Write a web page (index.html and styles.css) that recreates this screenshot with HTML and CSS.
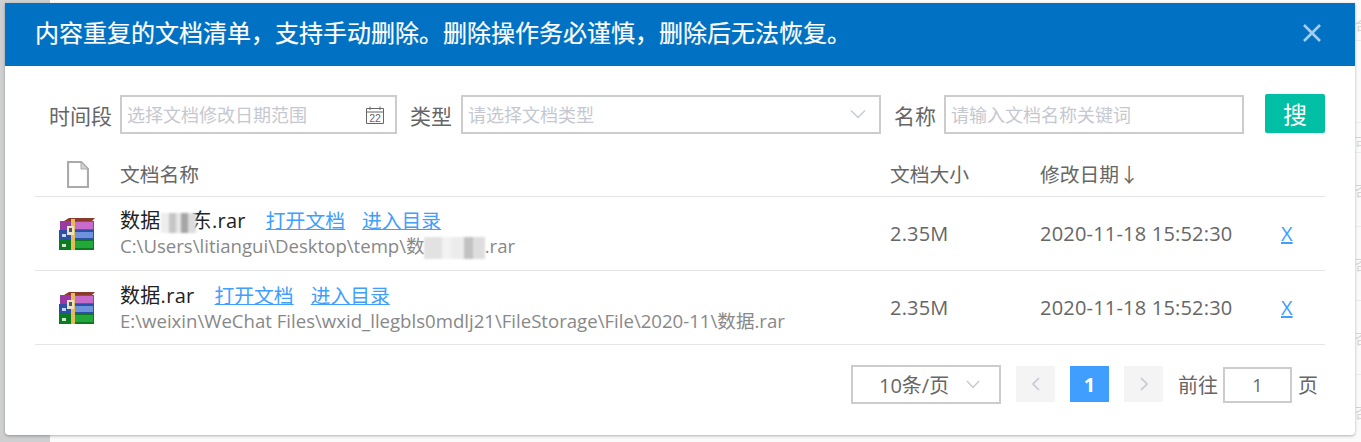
FILE: index.html
```html
<!DOCTYPE html>
<html lang="zh-CN">
<head>
<meta charset="utf-8">
<title>内容重复的文档清单</title>
<link rel="stylesheet" href="styles.css">
</head>
<body>
<aside class="side"></aside>
<main class="backdrop">
  <div class="bg-row bg-top"><span>合</span></div>
  <div class="bg-gap"></div>
  <div class="bg-row bg-head"><span>可</span></div>
  <div class="bg-row"><span>否</span></div>
  <div class="bg-row"><span>否</span></div>
  <div class="bg-row"><span>否</span></div>
  <div class="bg-row"><span>否</span></div>
</main>
<section class="modal">
  <header class="modal-head">
    <h1>内容重复的文档清单，支持手动删除。删除操作务必谨慎，删除后无法恢复。</h1>
    <svg class="close" viewBox="0 0 20 20" width="20" height="20"><path d="M2 2 18 18M18 2 2 18"/></svg>
  </header>
  <div class="modal-body">
    <div class="filters">
      <label class="lbl lbl-time">时间段</label>
      <div class="field f-date"><span>选择文档修改日期范围</span>
        <svg class="cal" viewBox="0 0 20 20" width="20" height="20"><path d="M1.5 3.5h17v15h-17zM1.5 7h17M5 1.5v3.5M15 1.5v3.5"/><text x="10" y="16.5" text-anchor="middle">22</text></svg>
      </div>
      <label class="lbl lbl-type">类型</label>
      <div class="field f-type"><span>请选择文档类型</span>
        <svg class="chev" viewBox="0 0 16 10" width="16" height="10"><path d="M1 1.5 8 8.5 15 1.5"/></svg>
      </div>
      <label class="lbl lbl-name">名称</label>
      <div class="field f-name"><span>请输入文档名称关键词</span></div>
      <button class="search">搜</button>
    </div>
    <div class="thead">
      <div class="c-icon">
        <svg viewBox="0 0 22 27" width="22" height="27"><path class="page" d="M1 1h13l7 7v18H1z"/><path class="fold" d="M14 1v7h7z"/></svg>
      </div>
      <div>文档名称</div>
      <div>文档大小</div>
      <div>修改日期↓</div>
      <div></div>
    </div>
    <div class="row">
      <div class="c-icon">
        <svg class="rar" viewBox="0 0 36 32" width="36" height="32"><use href="#rar"/></svg>
      </div>
      <div class="c-name">
        <div class="line1"><span class="fname">数据<span class="mosaic m1"></span>东.rar</span><a>打开文档</a><a>进入目录</a></div>
        <div class="fpath">C:\Users\litiangui\Desktop\temp\数<span class="mosaic m2"></span>.rar</div>
      </div>
      <div class="num">2.35M</div>
      <div class="num">2020-11-18 15:52:30</div>
      <div><a>X</a></div>
    </div>
    <div class="row">
      <div class="c-icon">
        <svg class="rar" viewBox="0 0 36 32" width="36" height="32"><use href="#rar"/></svg>
      </div>
      <div class="c-name">
        <div class="line1"><span class="fname">数据.rar</span><a>打开文档</a><a>进入目录</a></div>
        <div class="fpath">E:\weixin\WeChat Files\wxid_llegbls0mdlj21\FileStorage\File\2020-11\数据.rar</div>
      </div>
      <div class="num">2.35M</div>
      <div class="num">2020-11-18 15:52:30</div>
      <div><a>X</a></div>
    </div>
    <nav class="pager">
      <div class="field f-size"><span>10条/页</span>
        <svg class="chev small" viewBox="0 0 14 9" width="14" height="9"><path d="M1 1 7 7.5 13 1"/></svg>
      </div>
      <div class="pg"><svg viewBox="0 0 10 16" width="10" height="16"><path d="M8 2 2 8 8 14"/></svg></div>
      <div class="pg on">1</div>
      <div class="pg"><svg viewBox="0 0 10 16" width="10" height="16"><path d="M2 2 8 8 2 14"/></svg></div>
      <span class="goto">前往</span>
      <div class="field f-page">1</div>
      <span class="unit">页</span>
    </nav>
  </div>
</section>
<svg class="defs" width="0" height="0">
  <defs>
    <g id="rar">
      <path fill="#8a3a2a" d="M5 3 10 0h26l-3 3z"/>
      <rect x="1" y="3" width="34" height="10" fill="#9a3aa0"/>
      <rect x="16" y="4" width="18" height="7" fill="#c86ccb"/>
      <rect x="0" y="12" width="35" height="10" fill="#2c4fa8"/>
      <rect x="16" y="14" width="18" height="6" fill="#6f92dc"/>
      <rect x="0" y="22" width="35" height="10" fill="#0c7a1f"/>
      <rect x="16" y="23" width="18" height="7" fill="#23a63a"/>
      <rect x="3" y="26" width="4" height="3" fill="#cfe8cf"/>
      <rect x="12" y="1" width="4" height="31" fill="#e4bd5a"/>
      <rect x="8" y="8" width="7" height="9" fill="#e8e2cc"/>
      <rect x="10" y="10" width="3" height="4" fill="#555"/>
      <rect x="3" y="16" width="4" height="3" fill="#c9d5ee"/>
    </g>
  </defs>
</svg>
</body>
</html>
```
FILE: styles.css
```css
* { box-sizing: border-box; }
html, body { margin: 0; height: 100%; }
body {
  width: 1361px; height: 442px; overflow: hidden;
  display: flex;
  background: #f9faf9;
  font-family: "Open Sans", "Noto Sans CJK SC", sans-serif;
  color: #666;
}
.side { width: 50px; background: #cdcfd0; flex: none; }
.backdrop { flex: 1; }
.bg-row { height: 74px; border-bottom: 1px solid #eceded; display: flex; justify-content: flex-end; align-items: center; font-size: 14px; color: #d4d4d4; overflow: hidden; }
.bg-row span { width: 6px; overflow: hidden; white-space: nowrap; }
.bg-top { height: 41px; padding-top: 8px; }
.bg-gap { height: 81px; }
.bg-head { height: 31px; border-top: 1px solid #eceded; padding-top: 8px; }
.defs { position: absolute; }

.modal {
  position: absolute; left: 5px; top: 3px;
  width: 1350px; height: 432px;
  background: #fff;
  border-radius: 0 0 4px 4px;
  box-shadow: 0 1px 3px rgba(0,0,0,.3);
}
.modal-head {
  height: 63px; background: #0172c3;
  display: flex; align-items: center; justify-content: space-between;
  padding: 0 33px 4px 30px;
}
.modal-head h1 { margin: 0; font-size: 24px; font-weight: 400; color: #fff; line-height: 1; white-space: nowrap; -webkit-text-stroke: .2px #fff; }
.close { fill: none; stroke: #a6cdf0; stroke-width: 2.6; }

.modal-body { padding: 29px 30px 0; }
.filters { display: flex; align-items: center; height: 39px; }
.lbl { font-size: 21px; white-space: nowrap; color: #666; }
.lbl-time { margin-left: 14px; width: 71px; }
.lbl-type { margin-left: 13px; width: 51px; }
.lbl-name { margin-left: 13px; width: 50px; }
.field {
  height: 39px; border: 2px solid #ccc; background: #fff;
  display: flex; align-items: center; justify-content: space-between;
  padding: 0 5px; font-size: 18px; color: #c5c8d0; white-space: nowrap;
  flex: none;
}
.f-date, .f-type, .f-name { padding-bottom: 2px; }
.f-date { width: 277px; padding-right: 10px; }
.f-type { width: 420px; padding-right: 13px; }
.f-name { width: 300px; }
.cal { fill: none; stroke: #666; stroke-width: 1; margin-top: 2px; }
.cal text { fill: #666; stroke: none; font-size: 10.5px; font-family: "Liberation Sans", sans-serif; }
.chev { fill: none; stroke: #c6c9d0; stroke-width: 1.3; }
.search {
  margin-left: 21px; margin-top: -2px; width: 60px; height: 39px;
  background: #00bfa5; border: 0; border-radius: 2px;
  color: #fff; font: 400 24px "Noto Sans CJK SC", sans-serif; padding: 0;
}

.thead, .row {
  display: grid; grid-template-columns: 85px 770px 150px 241px 44px;
  border-bottom: 1px solid #e4e5e6; align-items: center;
  font-size: 20px; color: #666;
}
.thead { height: 63px; padding-top: 19px; font-size: 19.8px; }
.thead > div { line-height: 43px; }
.row { height: 74px; }
.num { letter-spacing: .2px; }
.c-icon { display: flex; justify-content: center; padding-right: 2px; }
.thead .c-icon { padding-right: 0; height: 43px; align-items: center; padding-top: 0; }
.page { fill: #fff; stroke: #aaa; stroke-width: 2.2; }
.fold { fill: #d4d4d4; stroke: #aaa; stroke-width: 1; }
.rar { filter: blur(.5px); }
.c-name { line-height: 1; }
.line1 { font-size: 20px; display: flex; line-height: 26px; white-space: nowrap; }
.fname { color: #222; margin-right: 20px; letter-spacing: .3px; }
.line1 a { font-size: 19.8px; margin-right: 17px; }
a { color: #409eff; text-decoration: underline; }
.fpath { font-size: 18.6px; line-height: 24px; color: #888; white-space: nowrap; }
.mosaic { display: inline-block; vertical-align: middle; filter: blur(1px); }
.m1 { width: 35px; height: 20px; margin-right: -4px; background: linear-gradient(90deg,#ededed 0 22%,#c6c6c6 22% 42%,#e6e6e6 42% 58%,#a6a6a6 58% 78%,#dcdcdc 78% 100%); }
.m2 { width: 61px; height: 22px; margin-left: -1px; background: linear-gradient(90deg,#e2e2e2 0 30%,#f2f2f2 30% 45%,#ececec 45% 65%,#c2c2c2 65% 80%,#dedede 80% 100%); }

.pager { display: flex; align-items: center; margin-top: 20px; height: 39px; font-size: 20px; color: #666; padding-left: 816px; }
.f-size { width: 150px; padding: 0 19px 0 26px; font-size: 20px; color: #666; }
.pg {
  width: 39px; height: 36px; background: #f4f4f5; flex: none;
  display: flex; align-items: center; justify-content: center;
  margin-left: 15px; margin-top: -1px;
}
.pg svg { fill: none; stroke: #c6c9d0; stroke-width: 1.6; }
.pg.on { background: #409eff; color: #fff; font-weight: 700; font-size: 20px; }
.goto { margin-left: 15px; width: 45px; }
.f-page { width: 69px; height: 36px; margin-top: 1px; justify-content: center; font-size: 18px; color: #666; }
.unit { margin-left: 6px; }
```
